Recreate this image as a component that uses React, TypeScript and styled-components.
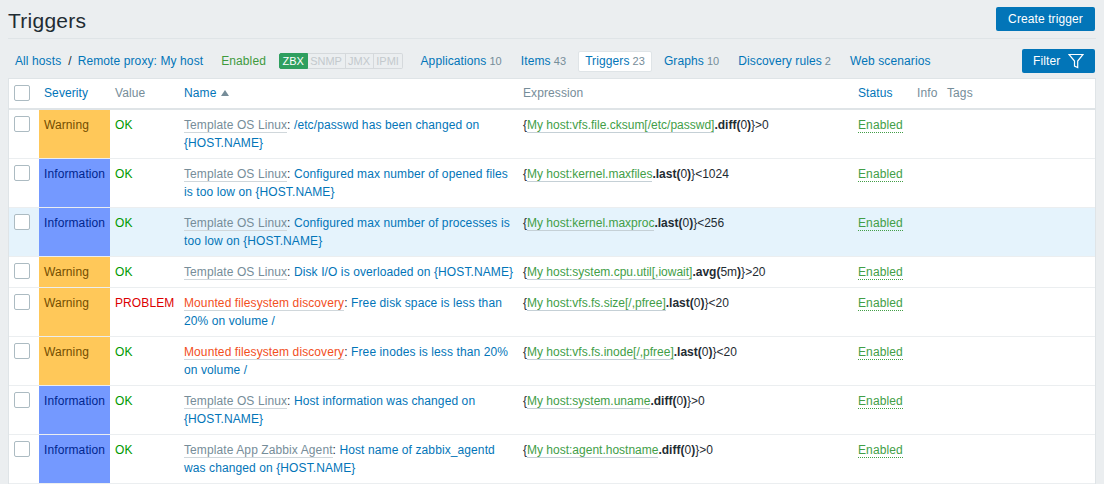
import React from 'react'
import styled, { createGlobalStyle } from 'styled-components'

const GlobalStyle = createGlobalStyle`
  html, body {
    margin: 0;
    padding: 0;
    background: #ebeef0;
    height: 484px;
    overflow: hidden;
  }
`

type Row = {
  severity: 'Warning' | 'Information'
  value: 'OK' | 'PROBLEM'
  source: string
  discovery?: boolean
  name: string
  key: string
  fn: string
  arg: string
  rest: string
  hover?: boolean
}

const rows: Row[] = [
  { severity: 'Warning', value: 'OK', source: 'Template OS Linux', name: '/etc/passwd has been changed on {HOST.NAME}', key: 'My host:vfs.file.cksum[/etc/passwd]', fn: 'diff', arg: '0', rest: '>0' },
  { severity: 'Information', value: 'OK', source: 'Template OS Linux', name: 'Configured max number of opened files is too low on {HOST.NAME}', key: 'My host:kernel.maxfiles', fn: 'last', arg: '0', rest: '<1024' },
  { severity: 'Information', value: 'OK', source: 'Template OS Linux', name: 'Configured max number of processes is too low on {HOST.NAME}', key: 'My host:kernel.maxproc', fn: 'last', arg: '0', rest: '<256', hover: true },
  { severity: 'Warning', value: 'OK', source: 'Template OS Linux', name: 'Disk I/O is overloaded on {HOST.NAME}', key: 'My host:system.cpu.util[,iowait]', fn: 'avg', arg: '5m', rest: '>20' },
  { severity: 'Warning', value: 'PROBLEM', source: 'Mounted filesystem discovery', discovery: true, name: 'Free disk space is less than 20% on volume /', key: 'My host:vfs.fs.size[/,pfree]', fn: 'last', arg: '0', rest: '<20' },
  { severity: 'Warning', value: 'OK', source: 'Mounted filesystem discovery', discovery: true, name: 'Free inodes is less than 20% on volume /', key: 'My host:vfs.fs.inode[/,pfree]', fn: 'last', arg: '0', rest: '<20' },
  { severity: 'Information', value: 'OK', source: 'Template OS Linux', name: 'Host information was changed on {HOST.NAME}', key: 'My host:system.uname', fn: 'diff', arg: '0', rest: '>0' },
  { severity: 'Information', value: 'OK', source: 'Template App Zabbix Agent', name: 'Host name of zabbix_agentd was changed on {HOST.NAME}', key: 'My host:agent.hostname', fn: 'diff', arg: '0', rest: '>0' },
]

const App = () => {
  return (
    <Page>
      <GlobalStyle />
      <Header>
        <Title>Triggers</Title>
        <CreateButton>Create trigger</CreateButton>
      </Header>
      <NavBar>
        <NavLinks>
          <HostLink>All hosts</HostLink>
          <Slash>/</Slash>
          <HostLink>Remote proxy: My host</HostLink>
          <EnabledLabel>Enabled</EnabledLabel>
          <Availability>
            <Badge $on>ZBX</Badge>
            <Badge>SNMP</Badge>
            <Badge>JMX</Badge>
            <Badge>IPMI</Badge>
          </Availability>
          <Tab>Applications<Count>10</Count></Tab>
          <Tab>Items<Count>43</Count></Tab>
          <Tab $active>Triggers<Count>23</Count></Tab>
          <Tab>Graphs<Count>10</Count></Tab>
          <Tab>Discovery rules<Count>2</Count></Tab>
          <Tab>Web scenarios</Tab>
        </NavLinks>
        <FilterButton>
          Filter
          <svg width="16" height="16" viewBox="0 0 16 16" fill="none" stroke="#fff" strokeWidth="1.2">
            <path d="M1 1.5h14L9.7 8v6.5l-3.2-1.5V8z" />
          </svg>
        </FilterButton>
      </NavBar>
      <Table>
        <colgroup>
          <col style={{ width: 30 }} />
          <col style={{ width: 71 }} />
          <col style={{ width: 69 }} />
          <col style={{ width: 339 }} />
          <col style={{ width: 335 }} />
          <col style={{ width: 59 }} />
          <col style={{ width: 30 }} />
          <col />
        </colgroup>
        <thead>
          <tr>
            <Th><Check /></Th>
            <Th $link>Severity</Th>
            <Th>Value</Th>
            <Th $link>Name <SortArrow /></Th>
            <Th>Expression</Th>
            <Th $link>Status</Th>
            <Th>Info</Th>
            <Th>Tags</Th>
          </tr>
        </thead>
        <tbody>
          {rows.map((r) => (
            <Tr key={r.name} $hover={r.hover}>
              <Td><Check /></Td>
              <SeverityCell $level={r.severity}>{r.severity}</SeverityCell>
              <ValueCell $problem={r.value === 'PROBLEM'}>{r.value}</ValueCell>
              <NameCell>
                <Source $discovery={r.discovery}>{r.source}</Source>
                <Colon>: </Colon>
                <TriggerName>{r.name}</TriggerName>
              </NameCell>
              <ExpressionCell>
                <Brace>{'{'}</Brace>
                <ItemKey>{r.key}</ItemKey>
                <strong>.{r.fn}(</strong>{r.arg}<strong>)</strong>{'}'}{r.rest}
              </ExpressionCell>
              <Td><Status>Enabled</Status></Td>
              <Td />
              <Td />
            </Tr>
          ))}
        </tbody>
      </Table>
    </Page>
  )
}

const Page = styled.div`
  box-sizing: border-box;
  width: 1104px;
  height: 484px;
  padding: 0 8px;
  overflow: hidden;
  font-family: "Liberation Sans", Arial, sans-serif;
  font-size: 12px;
  line-height: 14px;
  letter-spacing: 0.1px;
  color: #1f2c33;
`

const Header = styled.div`
  display: flex;
  align-items: flex-start;
  justify-content: space-between;
  box-sizing: border-box;
  height: 39px;
  padding-top: 7px;
  border-bottom: 1px solid #dfe4e7;
`

const Title = styled.h1`
  margin: 0;
  font-size: 21px;
  line-height: 28px;
  letter-spacing: 0.25px;
  font-weight: 400;
  color: #1f2c33;
`

const Button = styled.button`
  box-sizing: border-box;
  height: 24px;
  border: 0;
  border-radius: 2px;
  background: #0275b8;
  color: #fff;
  font: inherit;
  letter-spacing: inherit;
  padding: 0;
`

const CreateButton = styled(Button)`
  width: 99px;
  margin-right: 1px;
`

const NavBar = styled.div`
  display: flex;
  align-items: flex-start;
  justify-content: space-between;
  box-sizing: border-box;
  height: 39px;
  padding: 10px 1px 0 0;
`

const NavLinks = styled.div`
  display: flex;
  align-items: center;
  height: 24px;
  padding-left: 7px;
`

const HostLink = styled.span`
  color: #0275b8;
`

const Slash = styled.span`
  margin: 0 6px 0 7px;
  color: #1f2c33;
`

const EnabledLabel = styled.span`
  margin-left: 18px;
  color: #3e9a3e;
`

const Availability = styled.div`
  display: flex;
  margin: 0 11px 0 13px;
`

const Badge = styled.span<{ $on?: boolean }>`
  box-sizing: border-box;
  height: 16px;
  padding: 0 2.6px;
  font-size: 11px;
  line-height: 15px;
  letter-spacing: 0;
  border: 1px solid ${(p) => (p.$on ? '#2f9f5f' : '#d5d9dc')};
  border-left-width: ${(p) => (p.$on ? '1px' : '0')};
  border-radius: ${(p) => (p.$on ? '2px 0 0 2px' : '0')};
  background: ${(p) => (p.$on ? '#2f9f5f' : 'transparent')};
  color: ${(p) => (p.$on ? '#fff' : '#c3c9cd')};

  &:last-child {
    border-radius: 0 2px 2px 0;
  }
`

const Tab = styled.span<{ $active?: boolean }>`
  box-sizing: border-box;
  height: 21px;
  padding: 0 6px;
  margin-right: 5px;
  line-height: 19px;
  color: #0275b8;
  border-radius: 2px;
  white-space: nowrap;
  background: ${(p) => (p.$active ? '#fff' : 'transparent')};
  border: 1px solid ${(p) => (p.$active ? '#dfe4e7' : 'transparent')};
`

const Count = styled.span`
  margin-left: 3px;
  font-size: 11px;
  color: #768d99;
`

const FilterButton = styled(Button)`
  display: flex;
  align-items: center;
  gap: 8px;
  width: 73px;
  padding-left: 11px;
`

const Table = styled.table`
  width: 1088px;
  table-layout: fixed;
  border-collapse: separate;
  border-spacing: 0;
  background: #fff;
  border: 1px solid #dfe4e7;
  border-bottom: 0;
`

const Th = styled.th<{ $link?: boolean }>`
  box-sizing: border-box;
  height: 31px;
  padding: 0 5px 2px;
  text-align: left;
  font-weight: 400;
  white-space: nowrap;
  color: ${(p) => (p.$link ? '#0275b8' : '#768d99')};
  border-bottom: 2px solid #dfe4e7;
`

const SortArrow = styled.span`
  display: inline-block;
  width: 0;
  height: 0;
  margin-left: 1px;
  vertical-align: 1px;
  border-left: 4px solid transparent;
  border-right: 4px solid transparent;
  border-bottom: 6px solid #768d99;
`

const Tr = styled.tr<{ $hover?: boolean }>`
  background: ${(p) => (p.$hover ? '#e5f3fc' : 'transparent')};
`

const Td = styled.td`
  padding: 6px 5px;
  vertical-align: top;
  line-height: 18px;
  border-bottom: 1px solid #ebeef0;
  overflow: hidden;
`

const Check = styled.span`
  display: block;
  box-sizing: border-box;
  width: 16px;
  height: 16px;
  background: #fff;
  border: 1px solid #acbbc2;
  border-radius: 2px;
`

const SeverityCell = styled(Td)<{ $level: string }>`
  background: ${(p) => (p.$level === 'Warning' ? '#ffc859' : '#7499ff')};
  color: ${(p) => (p.$level === 'Warning' ? '#734d00' : '#00268e')};
  white-space: nowrap;
  padding-right: 0;
`

const ValueCell = styled(Td)<{ $problem?: boolean }>`
  color: ${(p) => (p.$problem ? '#dc0000' : '#009900')};
  white-space: nowrap;
  padding-right: 0;
`

const NameCell = styled(Td)`
  padding-right: 2px;
`

const ExpressionCell = styled(Td)`
  letter-spacing: 0;
`

const Source = styled.span<{ $discovery?: boolean }>`
  color: ${(p) => (p.$discovery ? '#f24f1d' : '#768d99')};
  border-bottom: 1px solid #d0d7db;
`

const Colon = styled.span`
  color: #1f2c33;
`

const TriggerName = styled.span`
  color: #0275b8;
`

const Brace = styled.span`
  color: #1f2c33;
`

const ItemKey = styled.span`
  color: #429e47;
  border-bottom: 1px solid #c5d0d6;
`

const Status = styled.span`
  color: #429e47;
  border-bottom: 1px dotted #429e47;
`

export default App
